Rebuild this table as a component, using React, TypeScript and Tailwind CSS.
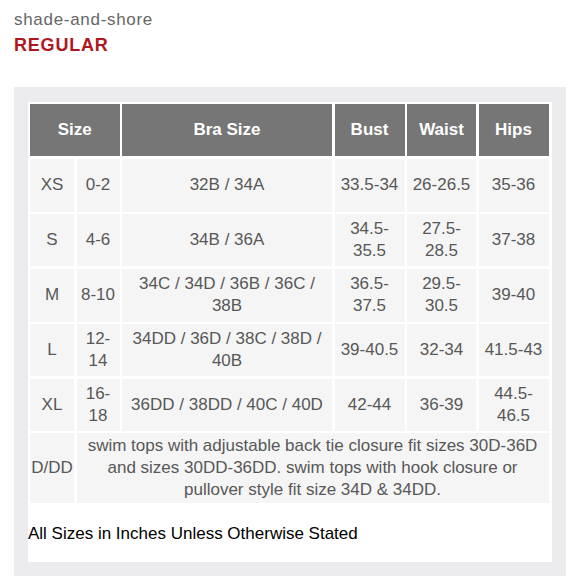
const rows = [
  { size: "XS", num: "0-2", bra: "32B / 34A", bust: "33.5-34", waist: "26-26.5", hips: "35-36" },
  { size: "S", num: "4-6", bra: "34B / 36A", bust: "34.5-35.5", waist: "27.5-28.5", hips: "37-38" },
  { size: "M", num: "8-10", bra: "34C / 34D / 36B / 36C / 38B", bust: "36.5-37.5", waist: "29.5-30.5", hips: "39-40" },
  { size: "L", num: "12-14", bra: "34DD / 36D / 38C / 38D / 40B", bust: "39-40.5", waist: "32-34", hips: "41.5-43" },
  { size: "XL", num: "16-18", bra: "36DD / 38DD / 40C / 40D", bust: "42-44", waist: "36-39", hips: "44.5-46.5" },
];

function Cell({ children, span }: { children: React.ReactNode; span?: string }) {
  return (
    <div className={`flex items-center justify-center bg-[#f5f5f5] px-[4px] text-center text-[17px] leading-[22px] text-[#585858] ${span ?? ""}`}>
      {children}
    </div>
  );
}

function Head({ children, span }: { children: React.ReactNode; span?: string }) {
  return (
    <div className={`flex items-center justify-center bg-[#767676] text-[17px] font-bold text-white ${span ?? ""}`}>
      {children}
    </div>
  );
}

export default function App() {
  return (
    <div className="h-[580px] w-[580px] bg-white font-['Liberation_Sans',Arial,sans-serif]">
      <div className="pl-[14px] pt-[10px]">
        <div className="text-[17px] leading-[20px] tracking-[0.7px] text-[#666]">shade-and-shore</div>
        <div className="mt-[4px] text-[18px] font-bold leading-[22px] tracking-[0.8px] text-[#b0161e]">REGULAR</div>
      </div>

      <div className="mx-[14px] mt-[31px] bg-[#ebebed] px-[14px] pb-[14px] pt-[15px]">
        <div className="bg-white">
          <div className="grid grid-cols-[44px_43px_210px_70px_69px_70px] grid-rows-[52px_53px_52px_53px_52px_52px_70px] gap-[2.5px] pl-[2px] pr-[3px] pt-[2px]">
            <Head span="col-span-2">Size</Head>
            <Head>Bra Size</Head>
            <Head>Bust</Head>
            <Head>Waist</Head>
            <Head>Hips</Head>

            {rows.map((r) => (
              <div key={r.size} className="contents">
                <Cell>{r.size}</Cell>
                <Cell>{r.num}</Cell>
                <Cell>{r.bra}</Cell>
                <Cell>{r.bust}</Cell>
                <Cell>{r.waist}</Cell>
                <Cell>{r.hips}</Cell>
              </div>
            ))}

            <Cell>D/DD</Cell>
            <Cell span="col-span-5">
              swim tops with adjustable back tie closure fit sizes 30D-36D and sizes 30DD-36DD. swim tops with hook closure or pullover style fit size 34D &amp; 34DD.
            </Cell>
          </div>

          <div className="pb-[18px] pt-[21px] text-[17px] leading-[20px] text-black">
            All Sizes in Inches Unless Otherwise Stated
          </div>
        </div>
      </div>
    </div>
  );
}
